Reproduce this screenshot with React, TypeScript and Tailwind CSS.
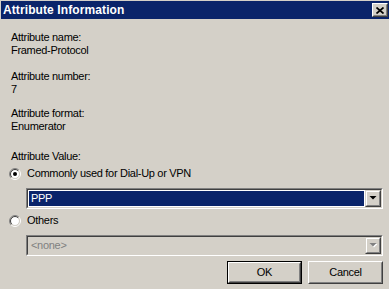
import React from 'react';

const font = { fontFamily: '"Liberation Sans", Arial, sans-serif' };

const Sunken: React.FC<{ className?: string; innerClassName?: string; children?: React.ReactNode }> = ({
  className = '',
  innerClassName = '',
  children,
}) => (
  <div className={`border border-t-[#808080] border-l-[#808080] border-r-white border-b-white ${className}`}>
    <div
      className={`h-full border border-t-[#404040] border-l-[#404040] border-r-[#d4d0c8] border-b-[#d4d0c8] flex ${innerClassName}`}
    >
      {children}
    </div>
  </div>
);

const ArrowButton: React.FC<{ disabled?: boolean }> = ({ disabled }) => (
  <div className="w-[16px] h-full border border-t-[#d4d0c8] border-l-[#d4d0c8] border-r-[#404040] border-b-[#404040] bg-[#d4d0c8]">
    <div className="h-full border border-t-white border-l-white border-r-[#808080] border-b-[#808080] flex items-center justify-center">
      <svg width="8" height="5" viewBox="0 0 8 5">
        {disabled && <polygon points="1.5,1 8.5,1 5,4.5" fill="#ffffff" />}
        <polygon points="0.5,0 7.5,0 4,3.5" fill={disabled ? '#808080' : '#000000'} />
      </svg>
    </div>
  </div>
);

const Radio: React.FC<{ checked?: boolean }> = ({ checked }) => (
  <svg width="12" height="12" viewBox="0 0 12 12" className="shrink-0">
    <circle cx="6" cy="6" r="4.2" fill="#ffffff" />
    <path d="M2.111 9.889 A5.5 5.5 0 0 1 9.889 2.111" stroke="#808080" fill="none" />
    <path d="M9.889 2.111 A5.5 5.5 0 0 1 2.111 9.889" stroke="#ffffff" fill="none" />
    <path d="M2.818 9.182 A4.5 4.5 0 0 1 9.182 2.818" stroke="#404040" fill="none" />
    <path d="M9.182 2.818 A4.5 4.5 0 0 1 2.818 9.182" stroke="#d4d0c8" fill="none" />
    {checked && <circle cx="6" cy="6" r="2" fill="#000000" />}
  </svg>
);

const Button: React.FC<{ label: string; isDefault?: boolean }> = ({ label, isDefault }) => {
  const body = (
    <div className="h-full border border-t-white border-l-white border-r-[#404040] border-b-[#404040]">
      <div className="h-full border border-t-[#d4d0c8] border-l-[#d4d0c8] border-r-[#808080] border-b-[#808080] flex items-center justify-center text-[11px] text-black">
        {label}
      </div>
    </div>
  );
  if (isDefault) {
    return <div className="w-[75px] h-[23px] border border-black">{body}</div>;
  }
  return <div className="w-[75px] h-[23px]">{body}</div>;
};

export default function App() {
  return (
    <div
      className="w-[389px] h-[289px] bg-[#d4d0c8] pt-[1px] pl-[1px] overflow-hidden text-black tracking-[-0.3px]"
      style={font}
    >
      <div className="h-[18px] bg-[#0a246a] flex items-center justify-between pl-[2px] pr-[1px]">
        <span className="text-white font-bold text-[12px] tracking-[0.1px]">Attribute Information</span>
        <div className="w-[16px] h-[14px] border border-t-white border-l-white border-r-[#404040] border-b-[#404040] bg-[#d4d0c8]">
          <div className="h-full border border-t-[#d4d0c8] border-l-[#d4d0c8] border-r-[#808080] border-b-[#808080] flex items-center justify-center">
            <svg width="8" height="7" viewBox="0 0 8 7">
              <path d="M0.5 0.5 L7.5 6.5 M7.5 0.5 L0.5 6.5" stroke="#000" strokeWidth="1.7" />
            </svg>
          </div>
        </div>
      </div>

      <div className="pl-[10px] pr-[6px] pt-[12px] text-[11px] leading-[13px]">
        <div>Attribute name:</div>
        <div>Framed-Protocol</div>

        <div className="mt-[13px]">Attribute number:</div>
        <div>7</div>

        <div className="mt-[11px]">Attribute format:</div>
        <div>Enumerator</div>

        <div className="mt-[17px]">Attribute Value:</div>

        <div className="mt-[4px] flex items-center gap-[6px] -ml-[2px]">
          <Radio checked />
          <span>Commonly used for Dial-Up or VPN</span>
        </div>

        <Sunken className="mt-[8px] ml-[15px] w-[357px] h-[21px]" innerClassName="bg-white">
          <div className="flex-1 p-[1px]">
            <div className="h-full bg-[#0a246a] text-white flex items-center pl-[2px]">PPP</div>
          </div>
          <ArrowButton />
        </Sunken>

        <div className="mt-[5px] flex items-center gap-[6px] -ml-[2px]">
          <Radio />
          <span>Others</span>
        </div>

        <Sunken className="mt-[8px] ml-[15px] w-[357px] h-[21px]" innerClassName="bg-[#d4d0c8]">
          <div className="flex-1 flex items-center pl-[3px] text-[#808080]">&lt;none&gt;</div>
          <ArrowButton disabled />
        </Sunken>

        <div className="mt-[5px] flex justify-end gap-[6px] pr-[0px]">
          <Button label="OK" isDefault />
          <Button label="Cancel" />
        </div>
      </div>
    </div>
  );
}
